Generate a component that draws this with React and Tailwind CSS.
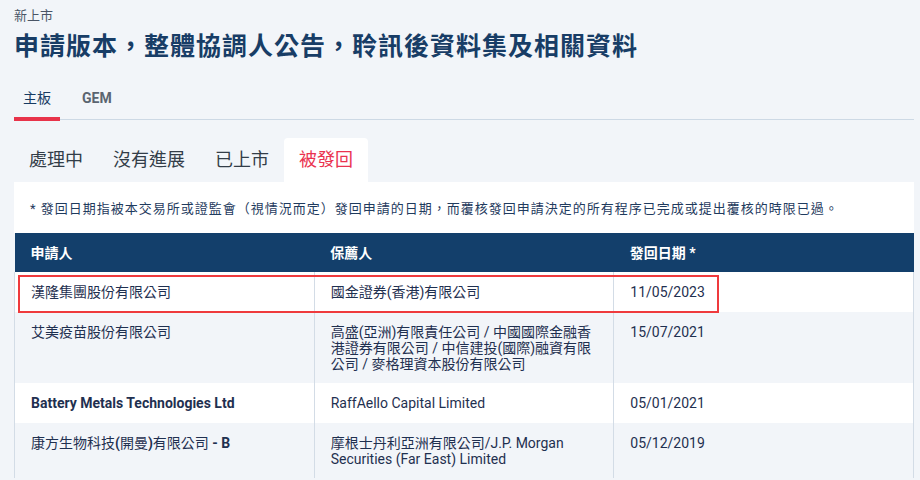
const ROWS = [
  {
    applicant: "漢隆集團股份有限公司",
    sponsor: "國金證券(香港)有限公司",
    date: "11/05/2023",
    bg: "bg-white",
  },
  {
    applicant: "艾美疫苗股份有限公司",
    sponsor: "高盛(亞洲)有限責任公司 / 中國國際金融香港證券有限公司 / 中信建投(國際)融資有限公司 / 麥格理資本股份有限公司",
    date: "15/07/2021",
    bg: "bg-[#f2f5f9]",
  },
  {
    applicant: <span className="font-bold">Battery Metals Technologies Ltd</span>,
    sponsor: "RaffAello Capital Limited",
    date: "05/01/2021",
    bg: "bg-white",
  },
  {
    applicant: (
      <>
        康方生物科技<b>(</b>開曼<b>)</b>有限公司<b> - B</b>
      </>
    ),
    sponsor: "摩根士丹利亞洲有限公司/J.P. Morgan Securities (Far East) Limited",
    date: "05/12/2019",
    bg: "bg-[#f2f5f9]",
  },
];

const SUB_TABS = ["處理中", "沒有進展", "已上市", "被發回"];

export default function App() {
  return (
    <div
      lang="zh-TW"
      className="h-[480px] w-[920px] overflow-hidden bg-[#f2f5f9] text-[#1f3050]"
      style={{ fontFamily: 'Roboto, "Noto Sans CJK TC", sans-serif' }}
    >
      <div className="pl-[14px] pr-[6px]">
        <div className="pt-[8px] text-[13px] leading-[16px] text-[#4a5566]">新上市</div>
        <h1 className="mt-[8px] text-[25px] font-bold leading-[30px] tracking-[1px] text-[#183d66]">
          申請版本，整體協調人公告，聆訊後資料集及相關資料
        </h1>

        <div className="mt-[26px] flex border-b border-[#cdd9e5]">
          <div className="relative px-[9px] pb-[11px] text-[14px] font-normal leading-[20px] text-[#163a62]">
            主板
            <span className="absolute bottom-[-2px] left-0 right-0 h-[4px] bg-[#e8334a]" />
          </div>
          <div className="ml-[13px] px-[9px] pb-[11px] text-[14px] font-bold leading-[20px] text-[#5b6470]">
            GEM
          </div>
        </div>

        <div className="mt-[18px] flex">
          {SUB_TABS.map((t) => {
            const active = t === "被發回";
            return (
              <div
                key={t}
                className={
                  active
                    ? "rounded-t-[4px] bg-white px-[15px] py-[10px] text-[18px] leading-[24px] text-[#ea3350]"
                    : "px-[15px] py-[10px] text-[18px] leading-[24px] text-[#333d48]"
                }
              >
                {t}
              </div>
            );
          })}
        </div>

        <div className="bg-white px-[16px] pb-[16px] pt-[18px] text-[13px] leading-[17px] tracking-[1px] text-[#1f3b5e]">
          * 發回日期指被本交易所或證監會（視情況而定）發回申請的日期，而覆核發回申請決定的所有程序已完成或提出覆核的時限已過。
        </div>

        <div className="relative">
          <table className="w-full table-fixed border-collapse text-[14px] leading-[16px]">
            <thead>
              <tr className="bg-[#133f6b] text-white">
                <th className="h-[39px] px-[16px] text-left font-bold">申請人</th>
                <th className="px-[16px] text-left font-bold">保薦人</th>
                <th className="px-[16px] text-left font-bold">發回日期 *</th>
              </tr>
            </thead>
            <tbody>
              {ROWS.map((r, i) => (
                <tr key={i} className={r.bg}>
                  <td className="h-[40px] border-x border-[#d3dce6] px-[16px] pb-[11px] pt-[12px] align-top">
                    {r.applicant}
                  </td>
                  <td className="border-x border-[#d3dce6] px-[16px] pb-[11px] pt-[12px] align-top">
                    {r.sponsor}
                  </td>
                  <td className="border-x border-[#d3dce6] px-[16px] pb-[11px] pt-[12px] align-top">
                    {r.date}
                  </td>
                </tr>
              ))}
            </tbody>
          </table>
          <div className="pointer-events-none absolute left-[4px] top-[42px] h-[38px] w-[701px] border-2 border-[#ef3a3d]" />
        </div>
      </div>
    </div>
  );
}
